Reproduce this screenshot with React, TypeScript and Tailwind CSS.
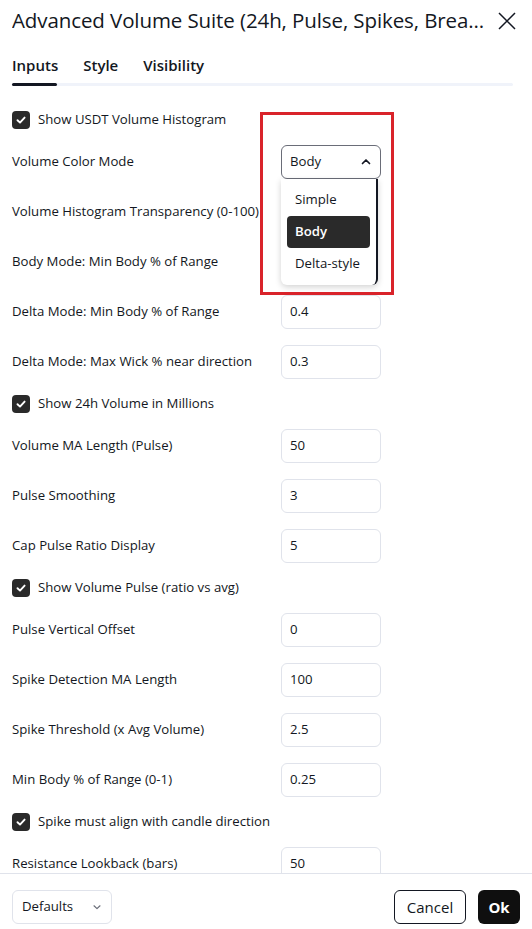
import React from "react";

const F = { fontFamily: '"Open Sans", "Noto Sans", sans-serif' };

function Check() {
  return (
    <div className="w-[18px] h-[18px] rounded-[4px] bg-[#2a2a2a] flex items-center justify-center shrink-0">
      <svg width="12" height="12" viewBox="0 0 12 12" fill="none">
        <path d="M2.5 6.2 L5 8.6 L9.6 3.6" stroke="white" strokeWidth="1.9" strokeLinecap="round" strokeLinejoin="round" />
      </svg>
    </div>
  );
}

function CheckRow({ label }: { label: string }) {
  return (
    <div className="h-[18px] flex items-center gap-2 shrink-0">
      <Check />
      <span className="text-[13.2px] text-[#131722]">{label}</span>
    </div>
  );
}

function InputRow({ label, value, hide }: { label: string; value?: string; hide?: boolean }) {
  return (
    <div className="h-[34px] flex items-center shrink-0">
      <span className="w-[269px] text-[13.2px] text-[#131722] whitespace-nowrap">{label}</span>
      {!hide && (
        <div className="w-[100px] h-[34px] border border-[#e0e3eb] rounded-[6px] flex items-center px-2 text-[13.2px] text-[#131722]">
          {value}
        </div>
      )}
    </div>
  );
}

export default function App() {
  return (
    <div style={F} className="w-[532px] h-[929px] bg-white flex flex-col overflow-hidden relative text-[#131722]">
      {/* header */}
      <div className="h-[40px] flex items-center pl-3 pr-4 pt-[1px] shrink-0">
        <div className="flex-1 text-[20.5px] font-medium truncate tracking-[-0.1px]">
          Advanced Volume Suite (24h, Pulse, Spikes, Brea...
        </div>
        <svg width="18" height="18" viewBox="0 0 18 18" className="ml-3 shrink-0">
          <path d="M1 1 L17 17 M17 1 L1 17" stroke="#131722" strokeWidth="1.5" />
        </svg>
      </div>
      {/* tabs */}
      <div className="px-3 pt-[15px] shrink-0">
        <div className="flex gap-[25px] text-[15px] font-semibold h-[20px] items-center">
          <span>Inputs</span>
          <span>Style</span>
          <span>Visibility</span>
        </div>
        <div className="mt-[8px] h-[3px] bg-[#f0f3fa] rounded-full relative w-[501px]">
          <div className="absolute left-0 top-0 h-[3px] w-[45px] bg-[#131722] rounded-full" />
        </div>
      </div>
      {/* content */}
      <div className="flex-1 overflow-hidden px-3 pt-[25px] flex flex-col gap-4">
        <CheckRow label="Show USDT Volume Histogram" />
        <div className="h-[34px] flex items-center shrink-0">
          <span className="w-[269px] text-[13.2px]">Volume Color Mode</span>
          <div className="w-[100px] h-[34px] border border-[#6a6d78] rounded-[6px] flex items-center justify-between px-2 text-[13.2px]">
            <span>Body</span>
            <svg width="12" height="12" viewBox="0 0 12 12">
              <path d="M2.5 7.5 L6 4 L9.5 7.5" stroke="#131722" strokeWidth="1.7" fill="none" strokeLinecap="round" strokeLinejoin="round" />
            </svg>
          </div>
        </div>
        <InputRow label="Volume Histogram Transparency (0-100)" hide />
        <InputRow label="Body Mode: Min Body % of Range" hide />
        <InputRow label="Delta Mode: Min Body % of Range" value="0.4" />
        <InputRow label="Delta Mode: Max Wick % near direction" value="0.3" />
        <CheckRow label="Show 24h Volume in Millions" />
        <InputRow label="Volume MA Length (Pulse)" value="50" />
        <InputRow label="Pulse Smoothing" value="3" />
        <InputRow label="Cap Pulse Ratio Display" value="5" />
        <CheckRow label="Show Volume Pulse (ratio vs avg)" />
        <InputRow label="Pulse Vertical Offset" value="0" />
        <InputRow label="Spike Detection MA Length" value="100" />
        <InputRow label="Spike Threshold (x Avg Volume)" value="2.5" />
        <InputRow label="Min Body % of Range (0-1)" value="0.25" />
        <CheckRow label="Spike must align with candle direction" />
        <InputRow label="Resistance Lookback (bars)" value="50" />
      </div>
      {/* footer */}
      <div className="h-[56px] border-t border-[#e0e3eb] flex items-start pt-[16px] px-3 shrink-0">
        <div className="w-[100px] h-[34px] border border-[#e0e3eb] rounded-[6px] flex items-center justify-between pl-[9px] pr-[8px] text-[13.2px]">
          <span>Defaults</span>
          <svg width="12" height="12" viewBox="0 0 12 12">
            <path d="M3 4.8 L6 7.6 L9 4.8" stroke="#6a6d78" strokeWidth="1.2" fill="none" strokeLinecap="round" strokeLinejoin="round" />
          </svg>
        </div>
        <div className="flex-1" />
        <div className="w-[72px] h-[34px] border border-[#131722] rounded-[6px] flex items-center justify-center text-[15px]">
          Cancel
        </div>
        <div className="ml-[12px] w-[42px] h-[34px] bg-[#0f0f0f] rounded-[6px] flex items-center justify-center text-[15px] font-bold text-white">
          Ok
        </div>
      </div>
      {/* dropdown */}
      <div className="absolute left-[281px] top-[179px] w-[97px] h-[106px] bg-white rounded-b-[6px] shadow-[0_2px_6px_rgba(0,0,0,0.18)] border-r-2 border-[#131722] flex flex-col px-[6px] py-[5px] text-[13.2px]">
        <div className="h-[32px] flex items-center px-2">Simple</div>
        <div className="h-[32px] flex items-center px-2 bg-[#2a2a2a] text-white font-semibold rounded-[4px]">Body</div>
        <div className="h-[32px] flex items-center px-2">Delta-style</div>
      </div>
      {/* red highlight */}
      <div className="absolute left-[260px] top-[112px] w-[134px] h-[183px] border-[3px] border-[#d9232a]" />
    </div>
  );
}
